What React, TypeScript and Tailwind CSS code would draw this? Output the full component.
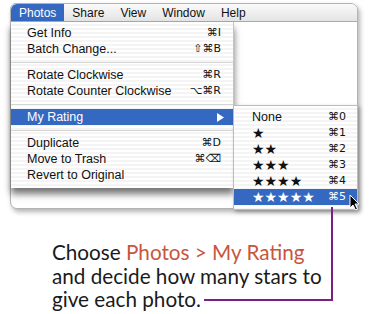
import React from "react";

const stripes =
  "bg-[repeating-linear-gradient(180deg,#ffffff_0px,#ffffff_2px,#f4f4f4_2px,#f4f4f4_4px)]";

type Item = { label: string; key?: string; sub?: boolean; active?: boolean } | "sep";

const items: Item[] = [
  { label: "Get Info", key: "⌘I" },
  { label: "Batch Change...", key: "⇧⌘B" },
  "sep",
  { label: "Rotate Clockwise", key: "⌘R" },
  { label: "Rotate Counter Clockwise", key: "⌥⌘R" },
  "sep",
  { label: "My Rating", sub: true, active: true },
  "sep",
  { label: "Duplicate", key: "⌘D" },
  { label: "Move to Trash", key: "⌘⌫" },
  { label: "Revert to Original" },
];

const ratings = ["None", "★", "★★", "★★★", "★★★★", "★★★★★"];

const MenuRow = ({ item }: { item: Item }) => {
  if (item === "sep")
    return (
      <div className="h-[10px] flex items-center">
        <div className="h-px w-full bg-[#d6d6d6]" />
      </div>
    );
  return (
    <div
      className={`h-4 flex items-center justify-between pl-[16px] pr-[12px] ${
        item.active ? "bg-[#3568c0] text-white" : "text-[#111]"
      }`}
    >
      <span>{item.label}</span>
      {item.sub ? (
        <svg width="7" height="9" viewBox="0 0 7 9" className="mr-[-3px]">
          <path d="M0 0 L7 4.5 L0 9 Z" fill="white" />
        </svg>
      ) : (
        <span className="font-['DejaVu_Sans',sans-serif] text-[11px]">{item.key}</span>
      )}
    </div>
  );
};

const Cursor = () => (
  <svg width="11" height="17" viewBox="0 0 11 17" className="absolute left-[115px] top-[88px]">
    <path d="M1 1 L1 14 L4 11 L6.5 16 L8.5 15 L6 10 L10 10 Z" fill="black" stroke="white" strokeWidth="1" />
  </svg>
);

export default function App() {
  return (
    <div className="w-[369px] h-[314px] bg-white relative overflow-hidden font-['Liberation_Sans','DejaVu_Sans',sans-serif] text-[12.5px]">
      <div className="pt-[3px] pl-[10px]">
        <div className="relative w-[348px] h-[206px] rounded-tl-[6px] rounded-tr-[7px] rounded-bl-[7px] border border-[#b3b3b3] bg-white shadow-[2px_3px_5px_rgba(0,0,0,0.3)] flex flex-col">
          {/* menu bar */}
          <div className="h-[18px] flex items-center rounded-t-[6px] border-b border-[#a9a9a9] bg-[linear-gradient(180deg,#fafafa,#e4e4e4)] text-[#111] text-[12px]">
            <div className="h-full flex items-center px-2 rounded-tl-[6px] bg-[#3568c0] text-white">
              Photos
            </div>
            <div className="px-2">Share</div>
            <div className="px-2">View</div>
            <div className="px-2">Window</div>
            <div className="px-2">Help</div>
          </div>
          {/* body */}
          <div className="flex-1 relative">
            <div
              className={`w-[223px] pt-[3px] pb-[5px] border-r border-[#c4c4c4] shadow-[0_6px_7px_rgba(0,0,0,0.55)] ${stripes}`}
            >
              {items.map((it, i) => (
                <MenuRow key={i} item={it} />
              ))}
            </div>
            {/* submenu */}
            <div
              className={`absolute left-[222px] top-[83px] w-[125px] pt-[3px] pb-[4px] border border-[#bdbdbd] shadow-[2px_2px_4px_rgba(0,0,0,0.3)] ${stripes}`}
            >
              {ratings.map((r, i) => {
                const active = i === 5;
                return (
                  <div
                    key={r}
                    className={`h-4 flex items-center justify-between pl-[18px] pr-[11px] ${
                      active ? "bg-[#3568c0] text-white" : "text-[#111]"
                    }`}
                  >
                    <span className={i === 0 ? "" : "font-['DejaVu_Sans',sans-serif] text-[14px] leading-none"}>
                      {r}
                    </span>
                    <span className="font-['DejaVu_Sans',sans-serif] text-[11px]">⌘{i}</span>
                  </div>
                );
              })}
              <Cursor />
            </div>
          </div>
        </div>
      </div>
      {/* callout */}
      <div className="w-[333px] pl-[52px] pt-[32px] font-['Lato',sans-serif] text-[20.7px] leading-[23.5px] text-[#1a1a1a]">
        <div>
          Choose <span className="text-[#c8553d]">Photos &gt; My Rating</span>
        </div>
        <div className="whitespace-nowrap">and decide how many stars to</div>
        <div className="flex items-center">
          <span>give each photo.</span>
          <span className="ml-[3px] mt-[1px] flex-1 h-[2px] bg-[#7b1f80]" />
        </div>
      </div>
      <svg className="absolute inset-0 pointer-events-none" width="369" height="314">
        <path d="M332 207 V301" fill="none" stroke="#7b1f80" strokeWidth="2" />
      </svg>
    </div>
  );
}
